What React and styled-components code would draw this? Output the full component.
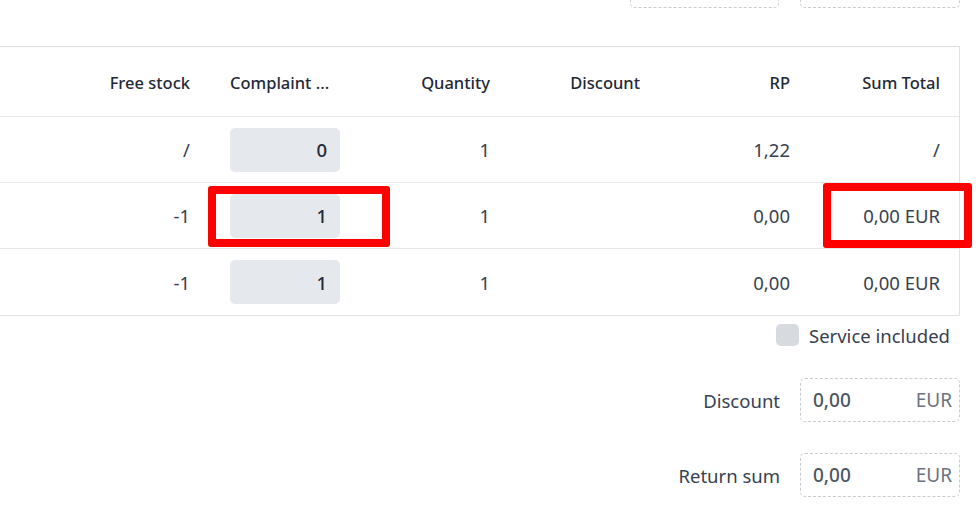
import React from "react";
import styled, { createGlobalStyle } from "styled-components";

const GlobalStyle = createGlobalStyle`
  html, body {
    margin: 0;
    padding: 0;
    background: #ffffff;
  }
  body {
    font-family: "Noto Sans", "Open Sans", sans-serif;
    color: #374151;
    overflow: hidden;
  }
`;

const rows = [
  { free: "/", complaint: "0", qty: "1", discount: "", rp: "1,22", sum: "/" },
  { free: "-1", complaint: "1", qty: "1", discount: "", rp: "0,00", sum: "0,00 EUR" },
  { free: "-1", complaint: "1", qty: "1", discount: "", rp: "0,00", sum: "0,00 EUR" },
];

function App() {
  return (
    <>
      <GlobalStyle />
      <Page>
        <TopBar>
          <AmountBox $width={149} />
          <AmountBox $width={160} />
        </TopBar>

        <TableWrap>
          <Table>
            <HeaderRow>
              <Cell />
              <HeadCell>Free stock</HeadCell>
              <HeadCell $align="left">Complaint ...</HeadCell>
              <HeadCell>Quantity</HeadCell>
              <HeadCell>Discount</HeadCell>
              <HeadCell>RP</HeadCell>
              <HeadCell>Sum Total</HeadCell>
            </HeaderRow>
            {rows.map((r, i) => (
              <BodyRow key={i} $last={i === rows.length - 1}>
                <Cell />
                <Cell>{r.free}</Cell>
                <Cell $align="left">
                  <QtyInput>{r.complaint}</QtyInput>
                </Cell>
                <Cell>{r.qty}</Cell>
                <Cell>{r.discount}</Cell>
                <Cell>{r.rp}</Cell>
                <Cell>{r.sum}</Cell>
              </BodyRow>
            ))}
          </Table>
          <Marker $left={208} $top={140} $width={182} $height={61} />
          <Marker $left={823} $top={137} $width={149} $height={65} />
        </TableWrap>

        <ServiceRow>
          <Check />
          <span>Service included</span>
        </ServiceRow>

        <FieldRow $gap={30}>
          <FieldLabel>Discount</FieldLabel>
          <AmountBox $width={160}>
            <AmountValue>0,00</AmountValue>
            <AmountUnit>EUR</AmountUnit>
          </AmountBox>
        </FieldRow>
        <FieldRow $gap={31}>
          <FieldLabel>Return sum</FieldLabel>
          <AmountBox $width={160}>
            <AmountValue>0,00</AmountValue>
            <AmountUnit>EUR</AmountUnit>
          </AmountBox>
        </FieldRow>
      </Page>
    </>
  );
}

const Page = styled.div`
  width: 960px;
  height: 516px;
  display: flex;
  flex-direction: column;
`;

const TopBar = styled.div`
  height: 8px;
  overflow: hidden;
  display: flex;
  justify-content: flex-end;
  align-items: flex-end;
  gap: 21px;
`;

const AmountBox = styled.div`
  width: ${(p) => p.$width}px;
  height: 44px;
  flex-shrink: 0;
  box-sizing: border-box;
  border: 1px dashed #c9cdd3;
  border-radius: 5px;
  display: flex;
  align-items: center;
  justify-content: space-between;
  padding: 0 7px 0 12px;
  font-size: 19px;
`;

const AmountValue = styled.span`
  color: #4b5563;
  font-weight: 500;
`;

const AmountUnit = styled.span`
  color: #6b7280;
`;

const TableWrap = styled.div`
  position: relative;
  margin-top: 38px;
`;

const Table = styled.div`
  border: 1px solid #dde2e8;
  border-left: none;
  box-sizing: border-box;
  width: 960px;
`;

const cols = "60px repeat(6, 150px)";

const HeaderRow = styled.div`
  display: grid;
  grid-template-columns: ${cols};
  height: 69px;
  border-bottom: 1px solid #e5e7eb;
  align-items: center;
`;

const BodyRow = styled.div`
  display: grid;
  grid-template-columns: ${cols};
  height: ${(p) => (p.$last ? 66 : 65)}px;
  border-bottom: ${(p) => (p.$last ? "none" : "1px solid #e5e7eb")};
  align-items: center;
`;

const Cell = styled.div`
  padding: 0 20px;
  text-align: ${(p) => p.$align || "right"};
  font-size: 18.5px;
  color: #374151;
  white-space: nowrap;
`;

const HeadCell = styled(Cell)`
  font-size: 16.5px;
  font-weight: 500;
  color: #1f2937;
  padding-top: 2px;
`;

const QtyInput = styled.div`
  width: 110px;
  height: 44px;
  box-sizing: border-box;
  background: #e5e8ed;
  border-radius: 5px;
  display: flex;
  align-items: center;
  justify-content: flex-end;
  padding-right: 13px;
  font-weight: 500;
  color: #1f2937;
`;

const Marker = styled.div`
  position: absolute;
  left: ${(p) => p.$left}px;
  top: ${(p) => p.$top}px;
  width: ${(p) => p.$width}px;
  height: ${(p) => p.$height}px;
  box-sizing: border-box;
  border: 8px solid #ff0000;
  border-radius: 3px;
  pointer-events: none;
`;

const ServiceRow = styled.div`
  display: flex;
  align-items: center;
  justify-content: flex-end;
  gap: 10px;
  margin-top: 6px;
  height: 26px;
  padding-right: 10px;
  font-size: 18.5px;
  color: #374151;
`;

const Check = styled.span`
  width: 23px;
  height: 22px;
  border-radius: 5px;
  background: #d7dbe0;
`;

const FieldRow = styled.div`
  display: flex;
  align-items: center;
  justify-content: flex-end;
  gap: 20px;
  margin-top: ${(p) => p.$gap}px;
`;

const FieldLabel = styled.span`
  font-size: 18.5px;
  color: #374151;
`;

export default App;
